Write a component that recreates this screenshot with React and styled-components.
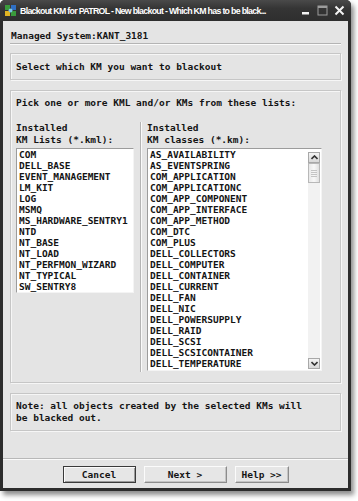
import React from "react";
import styled, { createGlobalStyle } from "styled-components";

const Global = createGlobalStyle`
  html, body { margin: 0; padding: 0; background: #ffffff; }
  body { width: 358px; height: 501px; overflow: hidden; }
`;

const MONO = `"DejaVu Sans Mono", "Liberation Mono", monospace`;

const Window = styled.div`
  width: 351px;
  height: 491px;
  box-sizing: border-box;
  display: flex;
  flex-direction: column;
  background: #2c2c2c;
  border-radius: 5px 5px 0 0;
  padding: 0 3px 3px 3px;
  box-shadow: 3px 4px 5px rgba(0, 0, 0, 0.45);
`;

const TitleBar = styled.div`
  height: 21px;
  flex: none;
  display: flex;
  align-items: center;
  margin: 0 -3px;
  padding: 0 6px 0 4px;
  border-radius: 5px 5px 0 0;
  background: linear-gradient(#4a4a4a, #353535 40%, #2e2e2e);
  color: #ffffff;
  font-family: "Liberation Sans", Arial, sans-serif;
  font-weight: bold;
  font-size: 8.8px;
  letter-spacing: -0.7px;
`;

const TitleText = styled.span`
  margin-left: 3px;
  flex: 1;
  white-space: nowrap;
  overflow: hidden;
`;

const TitleButtons = styled.div`
  display: flex;
  align-items: center;
  gap: 6px;
`;

const Body = styled.div`
  flex: 1;
  display: flex;
  flex-direction: column;
  background: #e4e4e4;
  padding: 0 7px 0 7px;
  font-family: ${MONO};
  font-weight: bold;
  font-size: 9.5px;
  color: #141414;
`;

const ManagedRow = styled.div`
  line-height: 11px;
  padding: 9px 0 2px 1px;
`;

const Etch = styled.div`
  height: 0;
  border-top: 1px solid #b4b4b4;
  border-bottom: 1px solid #fafafa;
`;

const Box = styled.div`
  border: 1px solid #c6c6c6;
  box-shadow: inset 1px 1px 0 #f6f6f6, 1px 1px 0 #f6f6f6;
  margin-top: ${(p) => p.$mt || 0}px;
  padding: ${(p) => p.$pad};
  line-height: ${(p) => p.$lh || 11}px;
  white-space: pre;
  box-sizing: border-box;
  height: ${(p) => (p.$h ? `${p.$h}px` : "auto")};
`;

const Columns = styled.div`
  display: flex;
  margin-top: 14px;
`;

const Column = styled.div`
  display: flex;
  flex-direction: column;
  width: ${(p) => p.$w}px;
`;

const VSep = styled.div`
  width: 0;
  border-left: 1px solid #b4b4b4;
  border-right: 1px solid #fafafa;
  margin: 0 5px 0 6px;
  height: 250px;
`;

const Label = styled.div`
  line-height: 11.5px;
  white-space: pre;
`;

const ListBox = styled.div`
  margin-top: 3px;
  height: ${(p) => p.$h}px;
  box-sizing: border-box;
  background: #ffffff;
  border: 1px solid;
  border-color: #9c9c9c #f4f4f4 #f4f4f4 #9c9c9c;
  display: flex;
  overflow: hidden;
`;

const Items = styled.div`
  flex: 1;
  padding-left: 2px;
  overflow: hidden;
`;

const Item = styled.div`
  line-height: 11px;
  height: 11px;
  white-space: nowrap;
`;

const ScrollBar = styled.div`
  width: 12px;
  margin: 3px 1px 1px 0;
  display: flex;
  flex-direction: column;
  background: #f2f2f2;
`;

const ScrollBtn = styled.div`
  height: 11px;
  box-sizing: border-box;
  border: 1px solid #a8a8a8;
  background: linear-gradient(#f4f4f4, #d8d8d8);
  display: flex;
  align-items: center;
  justify-content: center;
`;

const Thumb = styled.div`
  height: 20px;
  box-sizing: border-box;
  border: 1px solid #b8b8b8;
  background: linear-gradient(90deg, #e8e8e8, #f8f8f8, #e0e0e0);
  display: flex;
  align-items: center;
  justify-content: center;
`;

const Grip = styled.div`
  width: 6px;
  height: 7px;
  background: repeating-linear-gradient(#c4c4c4 0 1px, transparent 1px 2px);
`;

const Track = styled.div`
  flex: 1;
`;

const Footer = styled.div`
  background: #e4e4e4;
  border-top: 1px solid #b8b8b8;
  box-shadow: inset 0 1px 0 #fafafa;
  height: 30px;
  box-sizing: border-box;
  padding-top: 7px;
  display: flex;
  justify-content: center;
  gap: 8px;
  font-family: ${MONO};
  font-weight: bold;
  font-size: 9.5px;
  color: #141414;
`;

const Button = styled.div`
  width: ${(p) => p.$w}px;
  height: 17px;
  box-sizing: border-box;
  display: flex;
  align-items: center;
  justify-content: center;
  background: #e6e6e6;
  border: 1px solid;
  border-color: ${(p) =>
    p.$default ? "#3a3a3a" : "#fbfbfb #8c8c8c #8c8c8c #fbfbfb"};
  box-shadow: ${(p) =>
    p.$default
      ? "inset 1px 1px 0 #fbfbfb, inset -1px -1px 0 #9a9a9a"
      : "inset -1px -1px 0 #c4c4c4"};
  white-space: pre;
`;

const AppIcon = () => (
  <svg width="13" height="13" viewBox="0 0 13 13">
    <rect x="1" y="1" width="5" height="5" fill="#3a9a3c" />
    <rect x="7" y="1" width="5" height="5" fill="#2f6fc4" />
    <rect x="1" y="7" width="5" height="5" fill="#e0b423" />
    <rect x="7" y="7" width="5" height="5" fill="#3a9a3c" />
    <circle cx="6.5" cy="6.5" r="2" fill="#7bc6e8" />
  </svg>
);

const MinIcon = () => (
  <svg width="10" height="11" viewBox="0 0 10 11">
    <rect x="1" y="7" width="7" height="2.5" fill="#f2f2f2" />
  </svg>
);

const MaxIcon = () => (
  <svg width="11" height="11" viewBox="0 0 11 11">
    <rect x="1" y="1" width="9" height="9" fill="none" stroke="#9c9c9c" strokeWidth="1" />
    <rect x="1" y="1" width="9" height="2" fill="#9c9c9c" />
  </svg>
);

const CloseIcon = () => (
  <svg width="11" height="11" viewBox="0 0 11 11">
    <path d="M1.5 1.5 L9.5 9.5 M9.5 1.5 L1.5 9.5" stroke="#f4f4f4" strokeWidth="2" />
  </svg>
);

const Chevron = ({ up }) => (
  <svg width="7" height="5" viewBox="0 0 7 5">
    <path
      d={up ? "M0.5 4 L3.5 1 L6.5 4" : "M0.5 1 L3.5 4 L6.5 1"}
      fill="none"
      stroke="#333"
      strokeWidth="1.6"
    />
  </svg>
);

const kmlList = [
  "COM",
  "DELL_BASE",
  "EVENT_MANAGEMENT",
  "LM_KIT",
  "LOG",
  "MSMQ",
  "MS_HARDWARE_SENTRY1",
  "NTD",
  "NT_BASE",
  "NT_LOAD",
  "NT_PERFMON_WIZARD",
  "NT_TYPICAL",
  "SW_SENTRY8",
];

const kmList = [
  "AS_AVAILABILITY",
  "AS_EVENTSPRING",
  "COM_APPLICATION",
  "COM_APPLICATIONC",
  "COM_APP_COMPONENT",
  "COM_APP_INTERFACE",
  "COM_APP_METHOD",
  "COM_DTC",
  "COM_PLUS",
  "DELL_COLLECTORS",
  "DELL_COMPUTER",
  "DELL_CONTAINER",
  "DELL_CURRENT",
  "DELL_FAN",
  "DELL_NIC",
  "DELL_POWERSUPPLY",
  "DELL_RAID",
  "DELL_SCSI",
  "DELL_SCSICONTAINER",
  "DELL_TEMPERATURE",
];

export default function App() {
  return (
    <>
      <Global />
      <Window>
        <TitleBar>
          <AppIcon />
          <TitleText>
            Blackout KM for PATROL - New blackout - Which KM has to be black...
          </TitleText>
          <TitleButtons>
            <MinIcon />
            <MaxIcon />
            <CloseIcon />
          </TitleButtons>
        </TitleBar>
        <Body>
          <ManagedRow>Managed System:KANT_3181</ManagedRow>
          <Etch />
          <Box $mt={8} $pad="7px 0 7px 5px">
            Select which KM you want to blackout
          </Box>
          <Box $mt={10} $pad="6px 0 0 5px" $h={293}>
            <div>Pick one or more KML and/or KMs from these lists:</div>
            <Columns>
              <Column $w={118}>
                <Label>{"Installed\nKM Lists (*.kml):"}</Label>
                <ListBox $h={145}>
                  <Items>
                    {kmlList.map((k) => (
                      <Item key={k}>{k}</Item>
                    ))}
                  </Items>
                </ListBox>
              </Column>
              <VSep />
              <Column $w={175}>
                <Label>{"Installed\nKM classes (*.km):"}</Label>
                <ListBox $h={223}>
                  <Items>
                    {kmList.map((k) => (
                      <Item key={k}>{k}</Item>
                    ))}
                  </Items>
                  <ScrollBar>
                    <ScrollBtn>
                      <Chevron up />
                    </ScrollBtn>
                    <Thumb>
                      <Grip />
                    </Thumb>
                    <Track />
                    <ScrollBtn>
                      <Chevron />
                    </ScrollBtn>
                  </ScrollBar>
                </ListBox>
              </Column>
            </Columns>
          </Box>
          <Box $mt={10} $pad="6px 0 6px 5px" $lh={12}>
            {"Note: all objects created by the selected KMs will\nbe blacked out."}
          </Box>
        </Body>
        <Footer>
          <Button $w={73} $default>
            Cancel
          </Button>
          <Button $w={83}>{"Next >"}</Button>
          <Button $w={54}>{"Help >>"}</Button>
        </Footer>
      </Window>
    </>
  );
}
